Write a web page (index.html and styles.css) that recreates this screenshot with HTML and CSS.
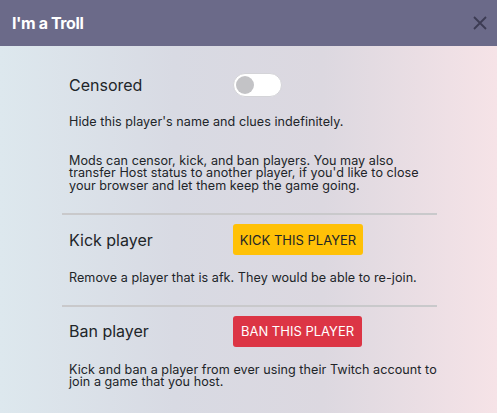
FILE: index.html
```html
<!DOCTYPE html>
<html>
<head>
<meta charset="utf-8">
<link rel="stylesheet" href="styles.css">
</head>
<body>
<div class="modal">
  <header class="modal-header">
    <h1 class="modal-title">I'm a Troll</h1>
    <button class="close" aria-label="Close">
      <svg width="14" height="14" viewBox="0 0 14 14"><path d="M1 1 L13 13 M13 1 L1 13" stroke="#3c3b53" stroke-width="1.8" fill="none"/></svg>
    </button>
  </header>
  <div class="modal-body">
    <div class="content">
      <section class="section first">
        <div class="row">
          <div class="label">Censored</div>
          <div class="toggle"><span class="knob"></span></div>
        </div>
        <p class="desc">Hide this player's name and clues indefinitely.</p>
        <p class="desc mods">Mods can censor, kick, and ban players. You may also transfer Host status to another player, if you'd like to close your browser and let them keep the game going.</p>
      </section>
      <section class="section kick">
        <div class="row">
          <div class="label">Kick player</div>
          <button class="btn btn-warning">KICK THIS PLAYER</button>
        </div>
        <p class="desc">Remove a player that is afk. They would be able to re-join.</p>
      </section>
      <section class="section ban">
        <div class="row">
          <div class="label">Ban player</div>
          <button class="btn btn-danger">BAN THIS PLAYER</button>
        </div>
        <p class="desc">Kick and ban a player from ever using their Twitch account to join a game that you host.</p>
      </section>
    </div>
  </div>
</div>
</body>
</html>
```

FILE: styles.css
```css
* { box-sizing: border-box; }
html, body { margin: 0; padding: 0; }
body {
  width: 497px;
  height: 413px;
  overflow: hidden;
  font-family: "Inter", "Noto Sans", sans-serif;
  color: #212529;
}
.modal { display: flex; flex-direction: column; height: 413px; }
.modal-header {
  height: 46px;
  background: #6b6a89;
  display: flex;
  align-items: center;
  justify-content: space-between;
  padding: 0 10px 0 12px;
}
.modal-title {
  margin: 0;
  font-size: 16px;
  font-weight: 700;
  color: #ffffff;
  letter-spacing: -0.4px;
}
.close {
  border: 0;
  background: none;
  padding: 0;
  width: 14px;
  height: 14px;
  display: block;
}
.close svg { display: block; }
.modal-body {
  flex: 1;
  background: linear-gradient(90deg, #dde8ee 0%, #d8dae3 35%, #dcd8e0 65%, #f6e3e7 100%);
}
.content {
  width: 375px;
  margin-left: 62px;
  padding-top: 27px;
}
.section { padding: 0 0 0 7px; border-top: 2px solid #c9c9cb; }
.section.first { border-top: 0; }
.row { display: flex; align-items: center; }
.label { width: 164px; font-size: 16px; }
.toggle {
  width: 49px;
  height: 24px;
  border-radius: 12px;
  background: #ffffff;
  border: 1px solid #d4d4d8;
  display: flex;
  align-items: center;
  padding-left: 2px;
}
.knob { width: 18px; height: 18px; border-radius: 50%; background: #c3c3c6; }
.desc { margin: 0; font-size: 12.6px; line-height: 12.5px; letter-spacing: 0.05px; }
.first .desc { margin-top: 19px; }
.first .desc.mods { margin-top: 26px; margin-bottom: 21px; }
.kick .row, .ban .row { padding-top: 9px; }
.kick .desc { margin-top: 17px; margin-bottom: 20px; }
.ban .desc { margin-top: 17px; }
.btn {
  border: 0;
  border-radius: 3px;
  height: 31px;
  padding: 0;
  font-family: inherit;
  font-size: 13px;
  white-space: nowrap;
  text-align: center;
}
.btn-warning { background: #ffc107; color: #212529; width: 130px; }
.btn-danger { background: #dc3545; color: #ffffff; width: 129px; }
```
